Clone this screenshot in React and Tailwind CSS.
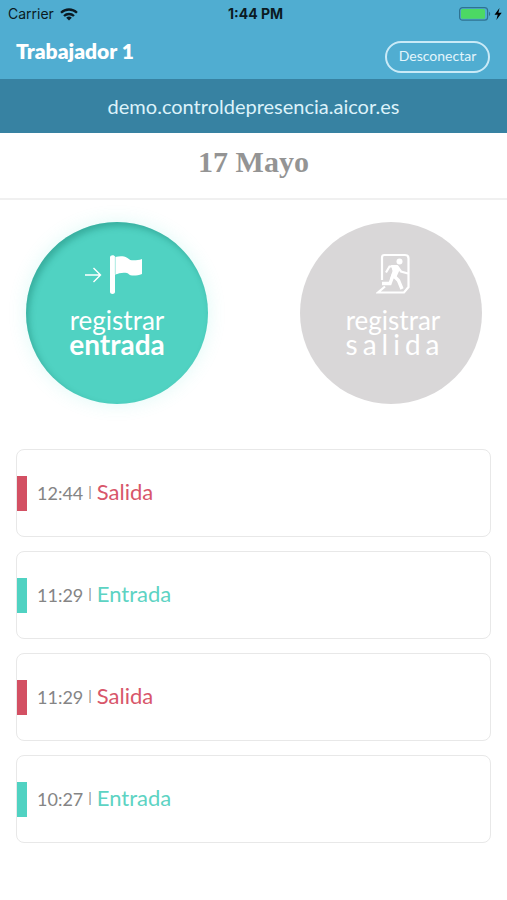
const ENTRIES = [
  { time: "12:44", type: "Salida" },
  { time: "11:29", type: "Entrada" },
  { time: "11:29", type: "Salida" },
  { time: "10:27", type: "Entrada" },
];

function WifiIcon() {
  return (
    <svg viewBox="0 0 18 13" className="w-[18px] h-[13px]" fill="none" stroke="#0b1a22" strokeWidth="2.3">
      <path d="M1 4.8a11.4 11.4 0 0 1 16 0" />
      <path d="M4 8a7.2 7.2 0 0 1 10 0" />
      <path d="M9 12.6 6.2 9.8a4 4 0 0 1 5.6 0Z" fill="#0b1a22" stroke="none" />
    </svg>
  );
}

function BatteryIcon() {
  return (
    <svg viewBox="0 0 44 14" className="w-11 h-3.5">
      <rect x="0.6" y="0.6" width="28" height="12.6" rx="3" fill="none" stroke="#2f7391" strokeWidth="1.2" />
      <rect x="2" y="2" width="24" height="9.8" rx="1.5" fill="#4cd964" />
      <path d="M30 4.8c1.6.6 1.6 3.6 0 4.2Z" fill="#2f7391" />
      <path d="M40.5 1 35.5 7.8h3.2L37.4 13l5.3-7.2h-3.3Z" fill="#000" />
    </svg>
  );
}

function FlagIcon() {
  return (
    <svg viewBox="1 0 64 42" className="w-16 h-[42px]">
      <path d="M1 22h15M9.5 15l7 7-7 7" fill="none" stroke="#fff" strokeWidth="1.4" />
      <path
        d="M26 4.5c0-2.8 4.5-2.8 5.2-.6 4.5-.8 8.5-1 11.8.8 1.8 1 2.5 2.4 4.8 2.6 3.2.2 6.5 0 10.2-1.3V21c-4 1.5-8 2-11.5 1.3-1.6-.4-1.6-1.8-3.6-2.3-4.300-.8-8 .2-11.900 1.600v17.500c0 2.600-5 2.600-5 0Z"
        fill="#fff"
      />
      <path d="M31.3 4v17" stroke="#50d2c2" strokeWidth="0.5" />
    </svg>
  );
}

function ExitIcon() {
  return (
    <svg viewBox="0 0 34 42" className="w-[34px] h-[42px]" fill="none" stroke="#fff">
      <path d="M6 27V4.5Q6 2 8.5 2H29q3.5 0 3.5 3.5V34L28 39.5H2L9 33.5" strokeWidth="2.2" />
      <circle cx="23.5" cy="8.5" r="3" fill="#fff" stroke="none" />
      <path d="M15 12h6.5l2.5 4-4 9-6 1 2.5-8Z" fill="#fff" stroke="none" />
      <path d="m10 19.5 3.5-6h8l3.5 5 7 2" strokeWidth="2.2" />
      <path d="m17.500 21-3.500 9.500H6" strokeWidth="3.4" />
      <path d="m18 23 4.500 4.500L26 36" strokeWidth="3.4" />
    </svg>
  );
}

function EntryCard({ time, type }) {
  const isOut = type === "Salida";

  return (
    <li className="flex items-center h-[88px] rounded-lg border border-[#e8e8e8]">
      <span className={`w-2.5 h-[35px] ${isOut ? "bg-[#d35063]" : "bg-[#50d2c2]"}`} />
      <p className="flex items-baseline gap-[5px] ml-2.5 pb-0.5 text-lg text-[#858585]">
        {time}
        <span className="self-center text-sm">|</span>
        <span className={`text-[22px] ${isOut ? "text-[#d8566a]" : "text-[#5dd3c3]"}`}>{type}</span>
      </p>
    </li>
  );
}

export default function App() {
  return (
    <div className="min-h-screen bg-white font-['Lato',sans-serif]">
      <header className="bg-[#50add1]">
        <div className="grid grid-cols-3 items-center h-7 pl-2 pr-1 font-['Inter',sans-serif] text-sm text-[#0b1a22]">
          <span className="flex items-center gap-1.5">
            Carrier <WifiIcon />
          </span>
          <span className="text-center font-bold whitespace-nowrap">1:44 PM</span>
          <span className="flex justify-end">
            <BatteryIcon />
          </span>
        </div>
        <div className="flex justify-between items-start h-[51px] pl-4 pr-[17px]">
          <h1 className="mt-[9px] text-[21px] leading-7 font-extrabold text-white">Trabajador 1</h1>
          <button
            type="button"
            className="mt-[13px] h-8 w-[105px] pb-0.5 rounded-full border-2 border-[#c9eaf7] text-sm text-[#e3f5fc]"
          >
            Desconectar
          </button>
        </div>
      </header>

      <p className="flex items-center justify-center h-[54px] bg-[#3782a2] text-xl text-[#dcf2fa]">
        demo.controldepresencia.aicor.es
      </p>

      <h2 className="h-[67px] pt-[11px] border-b-2 border-[#f0f0f0] text-center font-['Liberation_Serif',serif] text-3xl font-bold text-[#949494]">
        17 Mayo
      </h2>

      <main>
        <div className="flex justify-between pl-[26px] pr-[25px] pt-[22px]">
          <button
            type="button"
            className="flex flex-col items-center size-[182px] pt-[31px] rounded-full bg-[#50d2c2] text-white shadow-[0_0_18px_rgba(80,230,210,0.18),inset_3px_4px_6px_rgba(20,120,105,0.4)]"
          >
            <FlagIcon />
            <span className="mt-[13px] text-[26px] leading-6">registrar</span>
            <span className="text-[28px] leading-6 font-bold">entrada</span>
          </button>
          <button
            type="button"
            className="flex flex-col items-center size-[182px] pt-[31px] pl-1 rounded-full bg-[#d9d7d8] text-white"
          >
            <ExitIcon />
            <span className="mt-[13px] text-[26px] leading-6">registrar</span>
            <span className="pl-1 text-[28px] leading-6 tracking-[5px]">salida</span>
          </button>
        </div>

        <ul className="flex flex-col gap-3.5 px-4 pt-[45px] pb-14">
          {ENTRIES.map((entry, i) => (
            <EntryCard key={i} time={entry.time} type={entry.type} />
          ))}
        </ul>
      </main>
    </div>
  );
}
